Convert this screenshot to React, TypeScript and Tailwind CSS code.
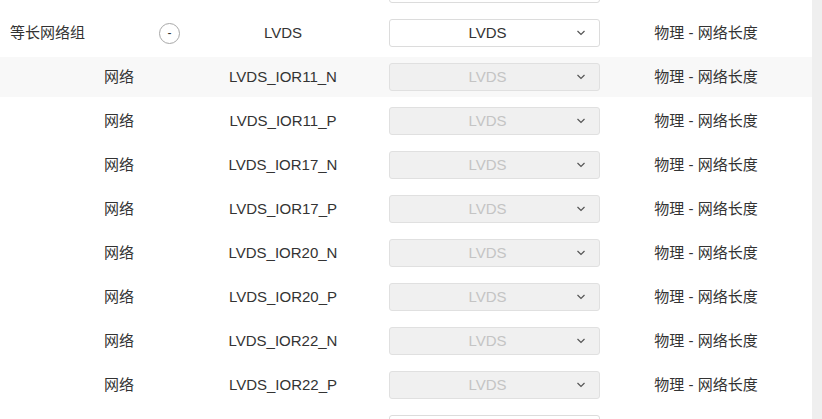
import React from 'react';

type Row = {
    kind: 'group' | 'net' | 'edge';
    name: string;
};

// first and last rows are scrolled mostly out of view; only their select borders peek in
const rows: Row[] = [
    { kind: 'edge', name: '' },
    { kind: 'group', name: 'LVDS' },
    { kind: 'net', name: 'LVDS_IOR11_N' },
    { kind: 'net', name: 'LVDS_IOR11_P' },
    { kind: 'net', name: 'LVDS_IOR17_N' },
    { kind: 'net', name: 'LVDS_IOR17_P' },
    { kind: 'net', name: 'LVDS_IOR20_N' },
    { kind: 'net', name: 'LVDS_IOR20_P' },
    { kind: 'net', name: 'LVDS_IOR22_N' },
    { kind: 'net', name: 'LVDS_IOR22_P' },
    { kind: 'edge', name: '' },
];

const Chevron = () => (
    <svg width="10" height="6" viewBox="0 0 10 6" fill="none" className="absolute right-[13px] top-1/2 -translate-y-1/2">
        <path d="M1.5 1L5 4.5L8.5 1" stroke="#555" strokeWidth="1.2" />
    </svg>
);

const Select = ({ disabled, label }: { disabled: boolean; label?: string }) => (
    <div
        className={`relative h-[28px] w-[211px] rounded-[3px] border flex items-center justify-center pr-[14px] ${
            disabled ? 'bg-[#f0f0f0] border-[#e0e0e0] text-[#c4c4c4]' : 'bg-white border-[#dcdcdc] text-[#333]'
        }`}
    >
        {label && <span>{label}</span>}
        {label && <Chevron />}
    </div>
);

const App = () => {
    return (
        <div
            className="flex h-[419px] w-[822px] overflow-hidden bg-white text-[15px] text-[#333]"
            style={{ fontFamily: '"Liberation Sans", "Noto Sans CJK SC", sans-serif' }}
        >
            <div className="flex-1 flex flex-col -mt-[33px]">
                {rows.map((row, i) => (
                    <div key={i} className="h-[44px] shrink-0 py-[2px]">
                        <div className={`h-10 flex items-center ${i === 2 ? 'bg-[#f8f8f8]' : ''}`}>
                            {row.kind === 'edge' ? (
                                <>
                                    <div className="w-[366px]" />
                                    <div className="w-[234px] pl-[23px]">
                                        <Select disabled={false} />
                                    </div>
                                </>
                            ) : (
                                <>
                                    {row.kind === 'group' ? (
                                        <div className="w-[200px] flex items-center pl-[10px]">
                                            <span>等长网络组</span>
                                            <button className="ml-[74px] size-[21px] rounded-full border border-[#a8a8a8] flex items-center justify-center text-[12px] leading-none text-[#333]">
                                                -
                                            </button>
                                        </div>
                                    ) : (
                                        <div className="w-[200px] pl-[104px]">网络</div>
                                    )}
                                    <div className="w-[166px] text-center">{row.name}</div>
                                    <div className="w-[234px] pl-[23px]">
                                        <Select disabled={row.kind === 'net'} label="LVDS" />
                                    </div>
                                    <div className="flex-1 text-center">物理 - 网络长度</div>
                                </>
                            )}
                        </div>
                    </div>
                ))}
            </div>
            <div className="w-[10px] shrink-0 bg-[#efefef]" />
        </div>
    );
};

export default App;
